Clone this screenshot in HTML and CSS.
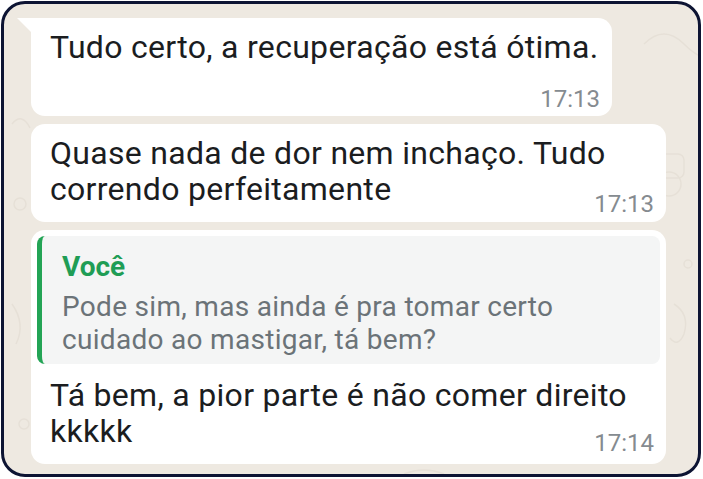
FILE: index.html
```html
<!DOCTYPE html>
<html lang="pt-BR">
<head>
    <meta charset="utf-8">
    <title>Conversa</title>
    <link rel="stylesheet" href="styles.css">
</head>
<body>
    <main class="chat">
        <svg class="doodles" width="700" height="476" viewBox="0 0 700 476" fill="none" stroke="#e6e0d7" stroke-width="1.5">
            <circle cx="665" cy="180" r="12"/>
            <rect x="650" y="150" width="30" height="24" rx="6"/>
            <path d="M640 40 q20 -20 40 0 t30 10"/>
            <path d="M8 300 q14 20 4 40"/>
            <circle cx="16" cy="200" r="6"/>
            <path d="M8 120 q10 -12 18 4"/>
            <circle cx="684" cy="260" r="4"/>
            <path d="M670 300 q16 10 10 30 q-6 14 -14 4"/>
            <circle cx="20" cy="420" r="5"/>
            <path d="M400 470 q20 -8 40 0"/>
        </svg>

        <div class="bubble first">
            <p class="text">Tudo certo, a recuperação está ótima.</p>
            <span class="time">17:13</span>
        </div>

        <div class="bubble wide">
            <p class="text">Quase nada de dor nem inchaço. Tudo<br>correndo perfeitamente</p>
            <span class="time inline">17:13</span>
        </div>

        <div class="bubble wide">
            <div class="quote">
                <strong class="author">Você</strong>
                <p class="quoted">Pode sim, mas ainda é pra tomar certo<br>cuidado ao mastigar, tá bem?</p>
            </div>
            <p class="text">Tá bem, a pior parte é não comer direito<br>kkkkk</p>
            <span class="time inline">17:14</span>
        </div>
    </main>
</body>
</html>
```

FILE: styles.css
```css
* {
    box-sizing: border-box;
    margin: 0;
}

body {
    background-color: white;
    font-family: Roboto, "Noto Sans", sans-serif;
    padding: 1px 2px 2px 1px;
}

.chat {
    position: relative;
    height: 476px;
    border: 3px solid #0d1433;
    border-radius: 24px;
    background-color: #eee9e1;
    padding: 14px 0 0 27px;
    display: flex;
    flex-direction: column;
    align-items: flex-start;
    gap: 8px;
    overflow: hidden;
}

.doodles {
    position: absolute;
    top: 0;
    left: 0;
}

.bubble {
    position: relative;
    background-color: white;
    border-radius: 14px;
    display: flex;
    flex-direction: column;
    padding: 11px 12px 3px 19px;
    height: 98px;
}

.first {
    width: 581px;
    border-top-left-radius: 0;
}

.first::before {
    content: "";
    position: absolute;
    top: 0;
    left: -14px;
    border-top: 14px solid white;
    border-left: 14px solid transparent;
}

.wide {
    width: 635px;
}

.wide:last-child {
    height: 234px;
    padding: 6px 6px 6px 6px;
}

.text {
    color: #1b1d1f;
    font-size: 32px;
    line-height: 36px;
    letter-spacing: 0.3px;
}

.time {
    align-self: flex-end;
    color: #858b90;
    font-size: 24px;
    line-height: 28px;
    margin-top: auto;
}

.bubble.wide .time.inline { margin-top: -17px }

.wide:last-child .text { padding-left: 13px }
.bubble.wide:last-child .time {
    margin-right: 6px;
    margin-top: -20px;
}

.quote {
    background-color: #f4f5f5;
    border-left: 5px solid #23a455;
    border-radius: 8px;
    padding: 14px 10px 10px 20px;
    height: 128px;
    margin-bottom: 13px;
}

.author {
    display: block;
    color: #1f9d55;
    font-size: 28px;
    line-height: 34px;
    font-weight: 700;
    margin-bottom: 6px;
}

.quoted {
    color: #6b7378;
    font-size: 28px;
    line-height: 33px;
    letter-spacing: 0.3px;
}
```
